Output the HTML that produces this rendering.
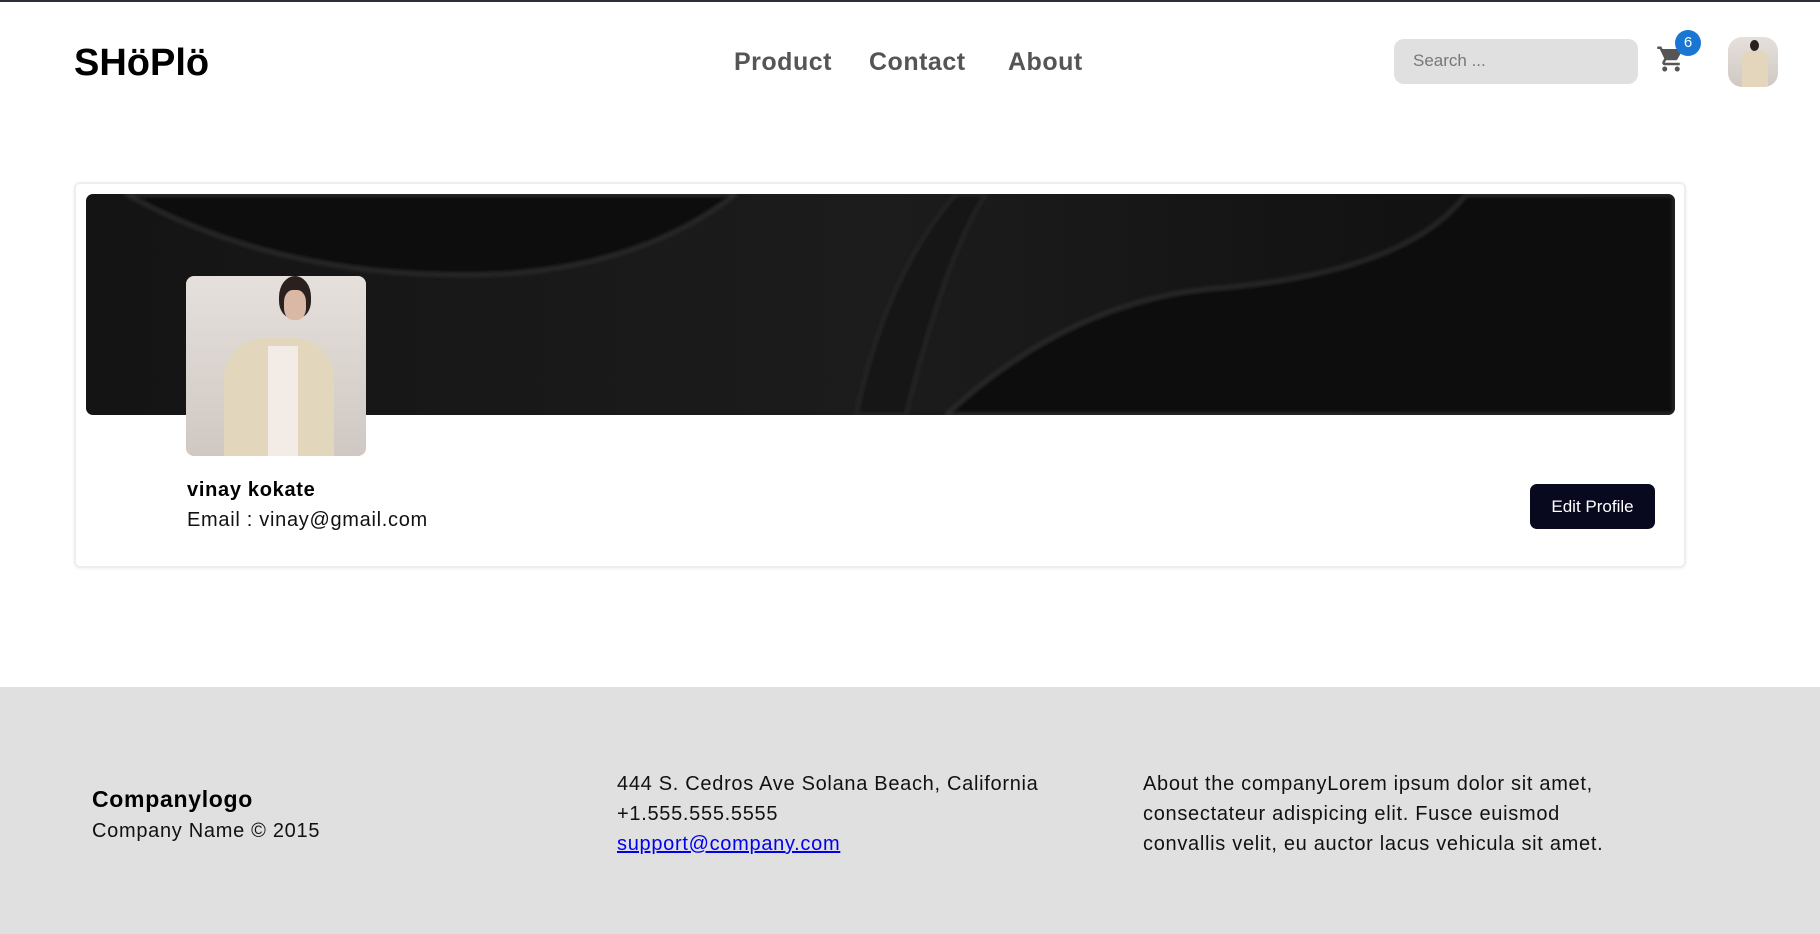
<!DOCTYPE html>
<html><head><meta charset="utf-8"><style>
*{margin:0;padding:0;box-sizing:border-box}
body{width:1820px;height:932px;overflow:hidden;background:#fff;font-family:"Liberation Sans",sans-serif;position:relative;border-top:2px solid #2a2f3a}
.a{position:absolute;white-space:nowrap}
.nav{color:#555;font-size:25px;font-weight:bold;top:46px;letter-spacing:.5px}
.person{background:linear-gradient(180deg,#e6e0dc,#cfc8c3)}
.t{letter-spacing:.7px}
</style></head><body>
<div class="a" style="left:74px;top:40px;font-size:38px;font-weight:bold;color:#000">SHöPlö</div>
<div class="a nav" style="left:734px">Product</div>
<div class="a nav" style="left:869px">Contact</div>
<div class="a nav" style="left:1008px">About</div>
<div class="a" style="left:1394px;top:37px;width:244px;height:45px;background:#e0e0e0;border-radius:10px;color:#777;font-size:17px;padding:12px 0 0 19px">Search ...</div>
<svg class="a" style="left:1656px;top:42px" width="30" height="30" viewBox="0 0 24 24"><path fill="#555" d="M7 18c-1.1 0-2 .9-2 2s.9 2 2 2 2-.9 2-2-.9-2-2-2zM1 2v2h2l3.6 7.59-1.350 2.45c-.16.28-.25.61-.25.96 0 1.1.9 2 2 2h12v-2H7.42c-.14 0-.25-.11-.25-.25l.03-.12.9-1.63h7.45c.75 0 1.41-.41 1.750-1.03l3.58-6.49A1 1 0 0 0 20 4H5.21l-.94-2H1zm16 16c-1.1 0-2 .9-2 2s.9 2 2 2 2-.9 2-2-.9-2-2-2z"/></svg>
<div class="a" style="left:1675px;top:28px;width:26px;height:26px;border-radius:50%;background:#1976d2;color:#fff;font-size:15px;text-align:center;line-height:26px">6</div>
<div class="a person" style="left:1728px;top:35px;width:50px;height:50px;border-radius:14px;overflow:hidden"><div style="position:absolute;left:14px;top:14px;width:26px;height:36px;background:#e3d6bd;border-radius:8px 8px 0 0"></div><div style="position:absolute;left:22px;top:3px;width:9px;height:11px;background:#2a211e;border-radius:50%"></div></div>

<div class="a" style="left:74px;top:180px;width:1612px;height:386px;border:2px solid #eee;border-radius:6px;box-shadow:0 1px 3px rgba(0,0,0,.06)"></div>
<svg class="a" style="left:86px;top:192px;border-radius:7px" width="1589" height="221" viewBox="0 0 1589 221">
<defs><linearGradient id="g" x1="0" y1="0" x2="1" y2="0"><stop offset="0" stop-color="#141414"/><stop offset=".5" stop-color="#1c1c1c"/><stop offset="1" stop-color="#0d0d0d"/></linearGradient>
<filter id="b"><feGaussianBlur stdDeviation="2"/></filter></defs>
<rect width="1589" height="221" fill="url(#g)"/>
<g filter="url(#b)">
<path d="M40 0 Q200 90 420 80 Q560 70 650 0Z" fill="#0e0e0e" stroke="#3a3a3a" stroke-width="2"/>
<path d="M870 0 Q800 80 770 221 L820 221 Q860 60 900 0Z" fill="#121212" stroke="#333" stroke-width="1.5"/>
<path d="M1380 0 Q1320 80 1120 95 Q980 110 860 221 L1589 221 L1589 0Z" fill="#0c0c0c" stroke="#3a3a3a" stroke-width="2"/>
</g>
</svg>
<div class="a person" style="left:186px;top:274px;width:180px;height:180px;border-radius:8px;overflow:hidden">
<div style="position:absolute;left:38px;top:62px;width:110px;height:130px;background:#e2d6bd;border-radius:40px 40px 0 0"></div>
<div style="position:absolute;left:82px;top:70px;width:30px;height:110px;background:#f3ece6"></div>
<div style="position:absolute;left:93px;top:0;width:32px;height:42px;background:#2a211e;border-radius:50% 50% 40% 40%"></div>
<div style="position:absolute;left:98px;top:14px;width:22px;height:30px;background:#d9b8a6;border-radius:40%"></div>
</div>
<div class="a t" style="left:187px;top:477px;font-size:20px;font-weight:bold;color:#000">vinay kokate</div>
<div class="a t" style="left:187px;top:507px;font-size:20px;color:#111">Email : vinay@gmail.com</div>
<div class="a" style="left:1530px;top:482px;width:125px;height:45px;background:#08081e;border-radius:7px;color:#fff;font-size:17px;text-align:center;line-height:45px">Edit Profile</div>

<div class="a" style="left:0;top:685px;width:1820px;height:247px;background:#e0e0e0"></div>
<div class="a t" style="left:92px;top:784px;font-size:23px;font-weight:bold;color:#000">Companylogo</div>
<div class="a t" style="left:92px;top:818px;font-size:20px;color:#111">Company Name © 2015</div>
<div class="a t" style="left:617px;top:767px;font-size:20px;color:#111;line-height:30px">444 S. Cedros Ave Solana Beach, California<br>+1.555.555.5555<br><span style="color:#00e;text-decoration:underline">support@company.com</span></div>
<div class="a t" style="left:1143px;top:767px;font-size:20px;color:#111;line-height:30px">About the companyLorem ipsum dolor sit amet,<br>consectateur adispicing elit. Fusce euismod<br>convallis velit, eu auctor lacus vehicula sit amet.</div>
</body></html>
